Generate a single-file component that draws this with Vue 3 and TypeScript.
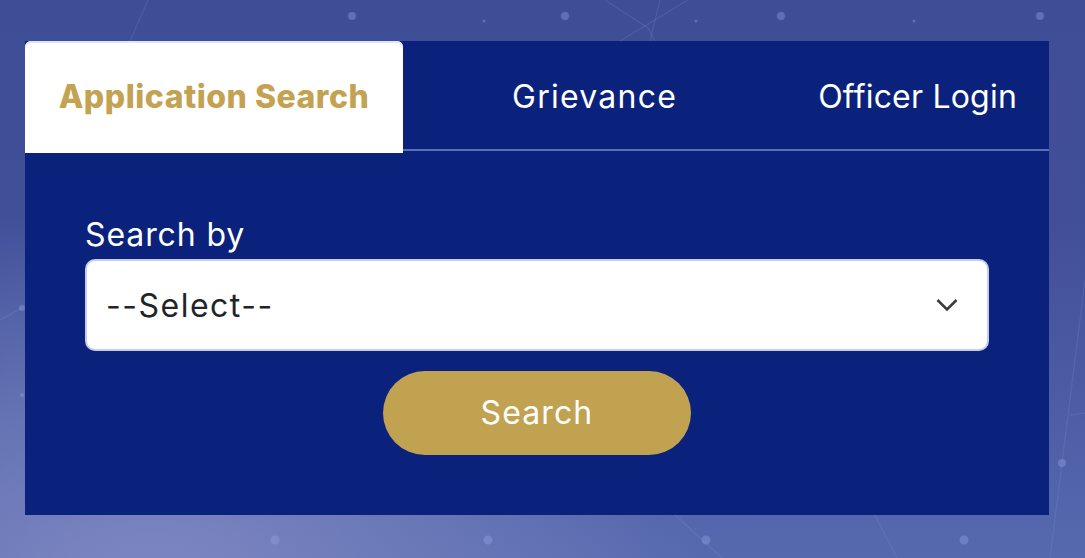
<script setup lang="ts">
interface Dot { x: number; y: number; r: number }
interface Tab { label: string; kind: string }
const tabs: Tab[] = [
  { label: 'Application Search', kind: 'active' },
  { label: 'Grievance', kind: 'grievance' },
  { label: 'Officer Login', kind: 'officer' }
]
const dots: Dot[] = [
  { x: 352, y: 16, r: 4 }, { x: 565, y: 16, r: 4 }, { x: 781, y: 16, r: 4 }, { x: 1040, y: 16, r: 4 },
  { x: 484, y: 21, r: 1.5 }, { x: 696, y: 21, r: 1.5 }, { x: 914, y: 21, r: 1.5 },
  { x: 275, y: 540, r: 4.5 }, { x: 488, y: 540, r: 4.5 }, { x: 706, y: 540, r: 4.5 }, { x: 964, y: 540, r: 4.5 },
  { x: 1062, y: 463, r: 4 }, { x: 22, y: 308, r: 3 }, { x: 22, y: 395, r: 2 }
]
const lines: string[] = [
  'M605 0L648 28L655 41', 'M688 0L620 41', 'M660 0L650 41', 'M148 0L130 41',
  'M675 515L722 558', 'M875 515L897 558', 'M1085 280L1062 463L1050 558', 'M1070 415L1085 413', 'M0 320L22 308'
]
</script>

<template>
  <main class="page">
    <svg class="backdrop" viewBox="0 0 1085 558" aria-hidden="true">
      <path v-for="(d, i) in lines" :key="i" :d="d" class="strand" />
      <circle v-for="(p, i) in dots" :key="'d' + i" :cx="p.x" :cy="p.y" :r="p.r" class="node" />
    </svg>
    <section class="panel">
      <nav class="tabs">
        <a
          v-for="tab in tabs"
          :key="tab.label"
          class="tab"
          :class="tab.kind"
        >{{ tab.label }}</a>
      </nav>
      <form class="form" @submit.prevent>
        <label class="label">Search by</label>
        <div class="select">
          <span class="value">--Select--</span>
          <svg class="chevron" viewBox="0 0 22 14" aria-hidden="true">
            <path d="M1.5 2L11 11.5L20.5 2" />
          </svg>
        </div>
        <button class="submit" type="submit">Search</button>
      </form>
    </section>
  </main>
</template>

<style scoped>
.page {
  position: relative;
  box-sizing: border-box;
  width: 1085px;
  height: 558px;
  overflow: hidden;
  padding: 41px 36px 43px 25px;
  font-family: Inter, "Liberation Sans", sans-serif;
  background:
    radial-gradient(ellipse 560px 400px at 14% 108%, #7f88c2 0%, rgba(127, 136, 194, 0) 100%),
    linear-gradient(180deg, #3e4e96 0%, #414f99 40%, #5669af 100%);
}
.backdrop {
  position: absolute;
  inset: 0;
  width: 1085px;
  height: 558px;
}
.strand {
  fill: none;
  stroke: rgba(150, 165, 225, 0.16);
  stroke-width: 1.2;
}
.node {
  fill: rgba(150, 165, 225, 0.38);
}
.panel {
  position: relative;
  height: 474px;
  background: #0b227c;
}
.tabs {
  display: flex;
  justify-content: space-between;
  height: 108px;
  border-bottom: 2px solid #5a6fba;
}
.tab {
  box-sizing: border-box;
  display: flex;
  align-items: center;
  justify-content: center;
  height: 112px;
  padding: 0 32px 2px;
  color: #fff;
  font-size: 32px;
  font-weight: 400;
}
.tab.grievance {
  letter-spacing: 1.25px;
}
.tab.officer {
  letter-spacing: 0.2px;
}
.tab.active {
  width: 378px;
  padding: 0 0 2px;
  border-radius: 6px 6px 0 0;
  background: #fff;
  color: #c3a252;
  font-weight: 800;
  letter-spacing: 0.5px;
  box-shadow: inset 0 2px 0 #dfe5f6;
}
.form {
  display: flex;
  flex-direction: column;
  padding: 66px 60px 0;
}
.label {
  color: #fff;
  font-size: 32px;
  letter-spacing: 0.9px;
  line-height: 36px;
  height: 42px;
}
.select {
  box-sizing: border-box;
  display: flex;
  align-items: center;
  justify-content: space-between;
  height: 92px;
  padding: 0 29px 0 19px;
  border: 2px solid #c4cdeb;
  border-radius: 10px;
  background: #fff;
}
.value {
  color: #212529;
  font-size: 32px;
  letter-spacing: 1.5px;
}
.chevron {
  width: 22px;
  height: 14px;
}
.chevron path {
  fill: none;
  stroke: #3a3d40;
  stroke-width: 2.6;
}
.submit {
  align-self: center;
  width: 308px;
  height: 84px;
  margin-top: 20px;
  padding: 0 0 2px;
  border: 0;
  border-radius: 42px;
  background: #c1a251;
  color: #fff;
  font-family: inherit;
  font-size: 32px;
  letter-spacing: 1.1px;
}
</style>
